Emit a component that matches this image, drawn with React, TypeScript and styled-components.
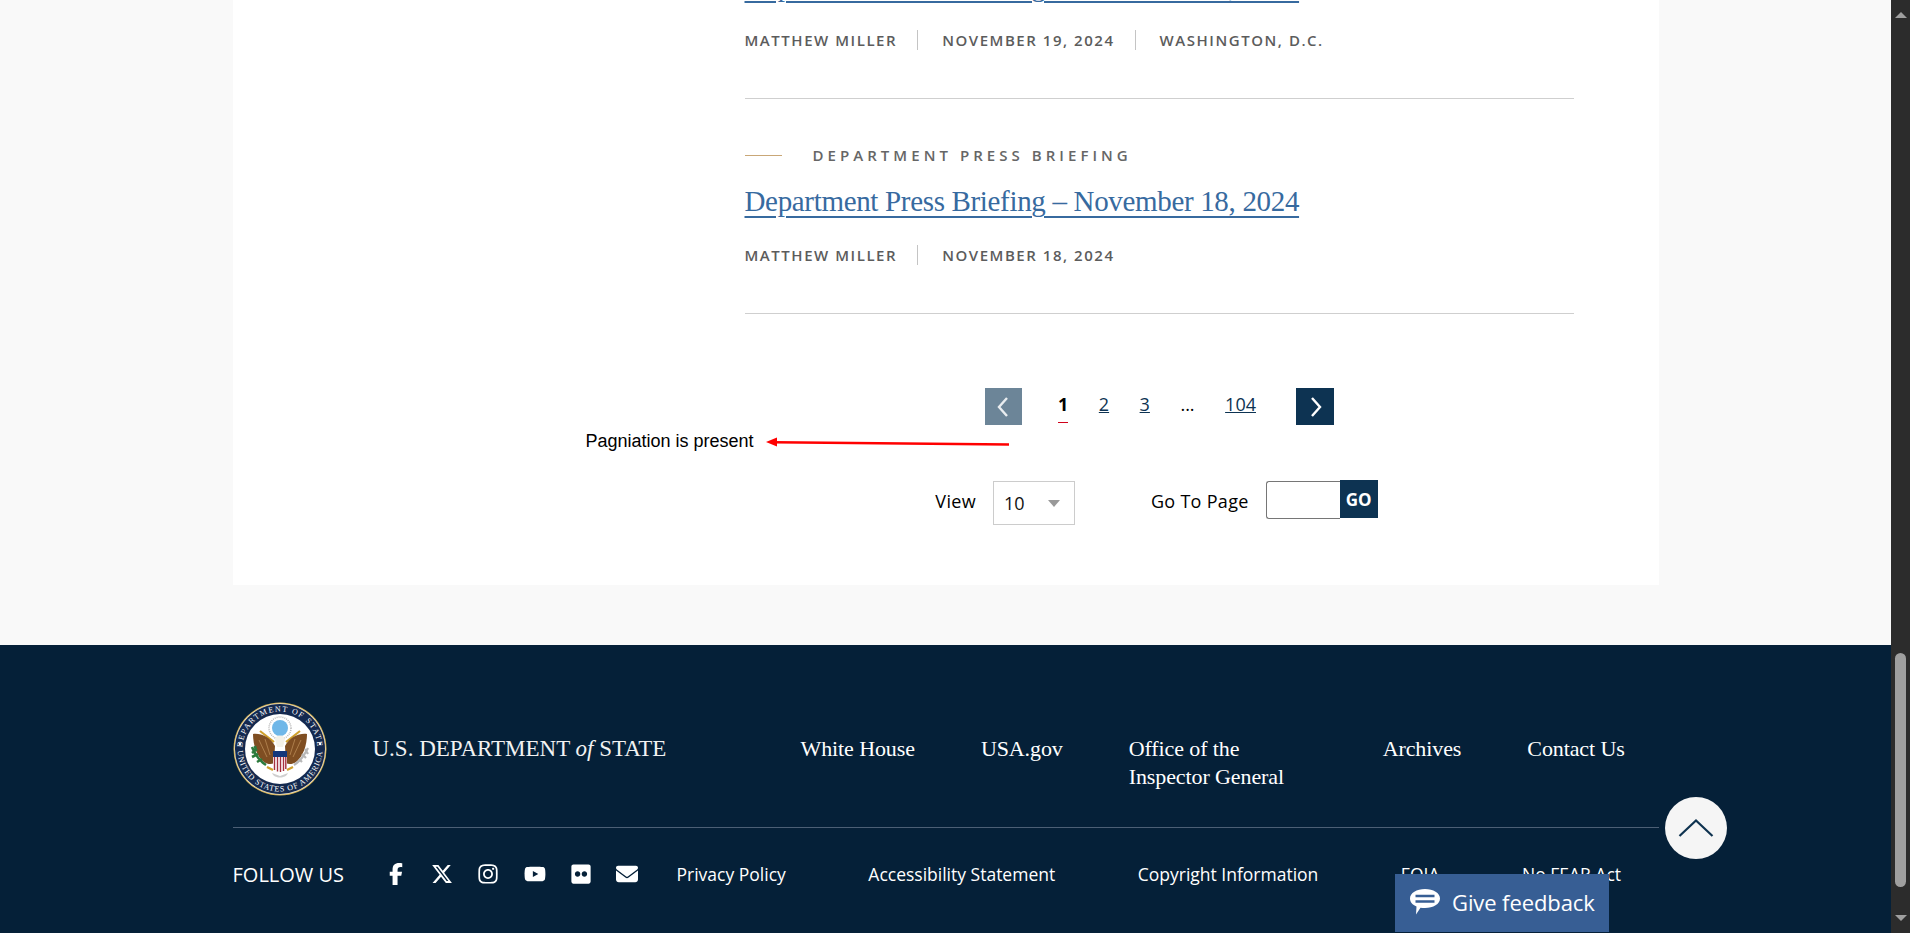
import React from 'react';
import styled, { createGlobalStyle } from 'styled-components';
import { FaFacebookF, FaXTwitter, FaInstagram, FaYoutube, FaFlickr, FaEnvelope } from 'react-icons/fa6';

const articles = [
  { title: 'Department Press Briefing – November 19, 2024', meta: ['Matthew Miller', 'November 19, 2024', 'Washington, D.C.'] },
  { title: 'Department Press Briefing – November 18, 2024', meta: ['Matthew Miller', 'November 18, 2024'] },
];

const topLinks = ['White House', 'USA.gov', 'Office of the Inspector General', 'Archives', 'Contact Us'];
const bottomLinks = ['Privacy Policy', 'Accessibility Statement', 'Copyright Information', 'FOIA', 'No FEAR Act'];
const socials = [FaFacebookF, FaXTwitter, FaInstagram, FaYoutube, FaFlickr, FaEnvelope];

const Seal = () => (
  <svg width="94" height="94" viewBox="0 0 94 94">
    <defs>
      <path id="sealTop" d="M9.500 47a37.500 37.500 0 0 1 75 0" />
      <path id="sealBottom" d="M4.500 47a42.500 42.500 0 0 0 85 0" />
    </defs>
    <circle cx="47" cy="47" r="46.500" fill="#d9b65c" />
    <circle cx="47" cy="47" r="45.500" fill="#f4efe0" />
    <circle cx="47" cy="47" r="45" fill="#14294f" />
    <circle cx="47" cy="47" r="35" fill="#fff" />
    <text fontFamily="Liberation Serif, serif" fontSize="8" fill="#fff" letterSpacing="1.300">
      <textPath href="#sealTop" startOffset="50%" textAnchor="middle">DEPARTMENT OF STATE</textPath>
    </text>
    <text fontFamily="Liberation Serif, serif" fontSize="8" fill="#fff" letterSpacing=".8">
      <textPath href="#sealBottom" startOffset="50%" textAnchor="middle">UNITED STATES OF AMERICA</textPath>
    </text>
    <circle cx="7" cy="42" r="1.300" fill="#fff" />
    <circle cx="87" cy="42" r="1.300" fill="#fff" />
    {/* glory */}
    <circle cx="47" cy="26" r="11" fill="#fff" stroke="#b9b9b9" strokeWidth="1.500" strokeDasharray="1 1" />
    <circle cx="47" cy="26" r="8" fill="#6fb7e8" />
    {/* arrows */}
    <path d="M27 29l14 11M67 29l-14 11" stroke="#d0a02c" strokeWidth="2.200" />
    {/* wings */}
    <path d="M20 32c8-1 17 3 22 12l-1 17c-3 2-7 1-10-1-7-5-11-17-11-28z" fill="#7f4e22" />
    <path d="M74 32c-8-1-17 3-22 12l1 17c3 2 7 1 10-1 7-5 11-17 11-28z" fill="#7f4e22" />
    <path d="M26 38l8 17M32 37l5 16M68 38l-8 17M62 37l-5 16" stroke="#b98a55" strokeWidth=".8" />
    {/* head */}
    <path d="M42 37c1-4 8-5 10 0l-2 8h-6z" fill="#f4f1e8" />
    {/* shield */}
    <path d="M40 49h14v6h-14z" fill="#14377a" />
    <path d="M40 55h14v10c0 3-4 4-7 5-3-1-7-2-7-5z" fill="#fff" />
    <path d="M41.500 55v13M44.500 55v14.500M47.500 55v15M50.500 55v14M52.800 55v12" stroke="#a5303f" strokeWidth="1.400" />
    {/* branches */}
    <path d="M19 45c2 5 6 13 14 18M24 47l-5 4M25 52l-6 3M29 57l-5 3M22 44l1 5" stroke="#2c7a3c" strokeWidth="2.600" fill="none" />
    <path d="M75 46c-3 6-7 13-14 17M72 47l3 5M69 52l4 4M66 57l3 3" stroke="#b7b7b7" strokeWidth="2.200" fill="none" />
    <path d="M34 65l6 3M60 65l-6 3" stroke="#d0a02c" strokeWidth="2.200" />
    {/* tail */}
    <path d="M39 71c2 6 14 6 16 0l-8 3z" fill="#cfcfcf" />
  </svg>
);

const App: React.FC = () => {
  return (
    <Viewport>
      <GlobalStyle />
      <Page>
        <Main>
          <Panel>
            {articles.map((item) => (
              <Article key={item.title}>
                <Kicker>
                  <KickerRule />
                  Department Press Briefing
                </Kicker>
                <Title href="#">{item.title}</Title>
                <Meta>
                  {item.meta.map((m) => (
                    <MetaItem key={m}>{m}</MetaItem>
                  ))}
                </Meta>
              </Article>
            ))}

            <Pagination>
              <Annotation>Pagniation is present</Annotation>
              <AnnotationArrow width="243" height="10" viewBox="0 0 243 10">
                <path d="M8 3.200 243 5.500" stroke="#f00" strokeWidth="2.500" fill="none" />
                <path d="M0 3l11-4.500v9z" fill="#f00" />
              </AnnotationArrow>
              <PageNav>
                <PageArrow $disabled aria-label="Previous">
                  <svg width="14" height="22" viewBox="0 0 14 22">
                    <path d="M11 2 3 11l8 9" fill="none" stroke="#fff" strokeWidth="2.400" opacity=".85" />
                  </svg>
                </PageArrow>
                <PageList>
                  <CurrentPage>1</CurrentPage>
                  <PageLink href="#">2</PageLink>
                  <PageLink href="#">3</PageLink>
                  <Ellipsis>...</Ellipsis>
                  <PageLink href="#">104</PageLink>
                </PageList>
                <PageArrow aria-label="Next">
                  <svg width="14" height="22" viewBox="0 0 14 22">
                    <path d="M3 2l8 9-8 9" fill="none" stroke="#fff" strokeWidth="2.400" />
                  </svg>
                </PageArrow>
              </PageNav>
              <Controls>
                <ControlGroup>
                  <ControlLabel>View</ControlLabel>
                  <SelectBox>
                    10
                    <SelectCaret />
                  </SelectBox>
                </ControlGroup>
                <ControlGroup>
                  <ControlLabel>Go To Page</ControlLabel>
                  <GoForm>
                    <GoInput />
                    <GoButton>GO</GoButton>
                  </GoForm>
                </ControlGroup>
              </Controls>
            </Pagination>
          </Panel>
        </Main>

        <Footer>
          <FooterInner>
            <FooterTop>
              <SealWrap>
                <Seal />
              </SealWrap>
              <Wordmark>
                U.S. DEPARTMENT <em>of</em> STATE
              </Wordmark>
              <TopLinks>
                {topLinks.map((l) => (
                  <TopLink key={l} href="#" $wide={l.length > 20}>
                    {l}
                  </TopLink>
                ))}
              </TopLinks>
            </FooterTop>
            <FooterBottom>
              <FollowUs>FOLLOW US</FollowUs>
              <Socials>
                {socials.map((Icon, i) => (
                  <SocialLink key={i} href="#">
                    <Icon />
                  </SocialLink>
                ))}
              </Socials>
              <BottomLinks>
                {bottomLinks.map((l) => (
                  <BottomLink key={l} href="#">
                    {l}
                  </BottomLink>
                ))}
              </BottomLinks>
            </FooterBottom>
          </FooterInner>
        </Footer>

        <ScrollTop aria-label="Back to top">
          <svg width="36" height="20" viewBox="0 0 36 20">
            <path d="M1.500 18 18 2.500 34.500 18" fill="none" stroke="#0f3350" strokeWidth="2.200" />
          </svg>
        </ScrollTop>
        <Feedback>
          <svg width="30" height="26" viewBox="0 0 30 26">
            <path d="M15 0c8.300 0 15 3.900 15 9.500S23.300 19 15 19c-1.600 0-3 0-4.500-.3L6 25.500l.5-8C2.500 16 0 13 0 9.500 0 3.900 6.700 0 15 0z" fill="#fff" />
            <path d="M5.500 7h19M5.500 12.500h19" stroke="#375e94" strokeWidth="2.400" />
          </svg>
          Give feedback
        </Feedback>
      </Page>
      <Scrollbar>
        <ScrollCaret />
        <ScrollTrack>
          <ScrollThumb />
        </ScrollTrack>
        <ScrollCaret $down />
      </Scrollbar>
    </Viewport>
  );
};

const GlobalStyle = createGlobalStyle`
  html, body {
    margin: 0;
    height: 100%;
    overflow: hidden;
    font-family: "Open Sans", "Liberation Sans", sans-serif;
  }
  * { box-sizing: border-box; }
`;

const Viewport = styled.div`
  display: flex;
  height: 933px;
  overflow: hidden;
`;

const Page = styled.div`
  position: relative;
  flex: 1;
  min-width: 0;
  overflow: hidden;
  background: #f9f9f9;
`;

const Main = styled.main`
  margin-top: -116px;
  padding-bottom: 60px;
`;

const Panel = styled.div`
  width: 1426px;
  margin: 0 auto;
  padding: 0 85px 60px 512px;
  background: #fff;
`;

const Article = styled.article`
  height: 215px;
  padding-top: 48px;
  border-bottom: 1px solid #cfcfcf;
`;

const Kicker = styled.div`
  display: flex;
  align-items: center;
  height: 16px;
  font-size: 15px;
  font-weight: 600;
  letter-spacing: 4.05px;
  text-transform: uppercase;
  color: #666;
`;

const KickerRule = styled.span`
  width: 37px;
  height: 1px;
  margin-right: 31px;
  background: #c9a777;
`;

const Title = styled.a`
  display: inline-block;
  margin-top: 19px;
  font-family: "Liberation Serif", serif;
  font-size: 29px;
  line-height: 38px;
  letter-spacing: -0.33px;
  color: #376a9f;
  text-decoration: underline;
  text-decoration-thickness: 2px;
  text-underline-offset: 5px;
`;

const Meta = styled.div`
  display: flex;
  margin-top: 25px;
`;

const MetaItem = styled.span`
  height: 20px;
  padding-right: 20px;
  margin-right: 24px;
  border-right: 1px solid #c4c4c4;
  font-size: 15px;
  font-weight: 600;
  line-height: 20px;
  letter-spacing: 1.54px;
  text-transform: uppercase;
  color: #5c5c5c;

  &:last-child {
    border-right: 0;
  }
`;

const Pagination = styled.section`
  position: relative;
  padding-top: 74px;
`;

const Annotation = styled.span`
  position: absolute;
  left: -159px;
  top: 115px;
  font-family: "Liberation Sans", Arial, sans-serif;
  font-size: 18px;
  line-height: 24px;
  color: #000;
`;

const AnnotationArrow = styled.svg`
  position: absolute;
  left: 21px;
  top: 125px;
  overflow: visible;
`;

const PageNav = styled.nav`
  display: flex;
  justify-content: center;
  align-items: flex-start;
  height: 37px;
  padding-left: 1px;
`;

const PageArrow = styled.button<{ $disabled?: boolean }>`
  display: flex;
  align-items: center;
  justify-content: center;
  width: ${(p) => (p.$disabled ? '37px' : '38px')};
  height: 37px;
  padding: ${(p) => (p.$disabled ? '0 2px 0 0' : '0 0 0 3px')};
  border: 0;
  background: ${(p) => (p.$disabled ? '#6c8598' : '#0d3352')};
`;

const PageList = styled.div`
  display: flex;
  align-items: flex-start;
  gap: 30.500px;
  margin: 0 40px 0 36px;
  font-size: 18px;
  line-height: 33px;
`;

const CurrentPage = styled.span`
  position: relative;
  font-weight: 700;
  color: #000;

  &::after {
    content: '';
    position: absolute;
    left: 0;
    right: 0;
    bottom: -2px;
    height: 1px;
    background: #d0021b;
  }
`;

const PageLink = styled.a`
  color: #0d3352;
  text-decoration: underline;
`;

const Ellipsis = styled.span`
  color: #000;
`;

const Controls = styled.div`
  display: flex;
  justify-content: center;
  gap: 76px;
  height: 44px;
  margin: 56px 5px 0 0;
`;

const ControlGroup = styled.div`
  display: flex;
  align-items: flex-start;
  gap: 17px;
`;

const ControlLabel = styled.label`
  font-size: 18px;
  letter-spacing: 0.3px;
  line-height: 40px;
  color: #000;
`;

const SelectBox = styled.div`
  display: flex;
  align-items: center;
  justify-content: space-between;
  width: 82px;
  height: 44px;
  padding: 0 14px 0 10px;
  border: 1px solid #ccc;
  font-size: 18px;
  color: #111;
`;

const SelectCaret = styled.span`
  width: 0;
  height: 0;
  border-left: 6px solid transparent;
  border-right: 6px solid transparent;
  border-top: 7px solid #999;
`;

const GoForm = styled.div`
  display: flex;
`;

const GoInput = styled.input`
  width: 74px;
  height: 38px;
  padding: 0;
  border: 1px solid #767676;
  border-right: 0;
  border-radius: 3px 0 0 3px;
  background: #fff;
`;

const GoButton = styled.button`
  width: 38px;
  height: 38px;
  margin-top: -1px;
  padding: 0;
  border: 0;
  background: #0d3352;
  font-family: inherit;
  font-size: 17px;
  font-weight: 700;
  color: #fff;
`;

const Footer = styled.footer`
  height: 400px;
  padding-top: 57px;
  background: #052038;
`;

const FooterInner = styled.div`
  width: 1426px;
  margin: 0 auto;
`;

const FooterTop = styled.div`
  display: flex;
  align-items: flex-start;
  height: 126px;
  border-bottom: 1px solid #4c5f75;
`;

const SealWrap = styled.div`
  flex: 0 0 94px;
  height: 94px;
  margin-right: 46px;
`;

const Wordmark = styled.div`
  flex: 0 0 428px;
  padding-top: 33px;
  font-family: "Liberation Serif", serif;
  font-size: 23px;
  line-height: 28px;
  color: #f2f2f2;

  em {
    font-style: italic;
  }
`;

const TopLinks = styled.div`
  display: flex;
  gap: 66px;
  padding-top: 33px;
`;

const TopLink = styled.a<{ $wide?: boolean }>`
  ${(p) => p.$wide && 'width: 188px;'}
  font-family: "Liberation Serif", serif;
  font-size: 22px;
  line-height: 28px;
  letter-spacing: -0.1px;
  color: #fff;
  text-decoration: none;
`;

const FooterBottom = styled.div`
  display: flex;
  align-items: center;
  height: 92px;
`;

const FollowUs = styled.span`
  width: 140px;
  font-size: 20px;
  color: #fff;
`;

const Socials = styled.div`
  display: flex;
  align-items: center;
  width: 304px;
`;

const SocialLink = styled.a`
  display: flex;
  justify-content: center;
  width: 46.300px;
  font-size: 22px;
  color: #fff;
`;

const BottomLinks = styled.div`
  display: flex;
  gap: 82.500px;
`;

const BottomLink = styled.a`
  font-size: 17.500px;
  color: #fff;
  text-decoration: none;
`;

const ScrollTop = styled.button`
  position: absolute;
  left: 1665px;
  top: 797px;
  display: flex;
  align-items: center;
  justify-content: center;
  width: 62px;
  height: 62px;
  padding: 0;
  border: 0;
  border-radius: 50%;
  background: #f5f5f5;
`;

const Feedback = styled.button`
  position: absolute;
  left: 1395px;
  top: 874px;
  display: flex;
  align-items: center;
  gap: 12px;
  width: 214px;
  height: 58px;
  padding: 0 0 2px 15px;
  border: 0;
  background: #375e94;
  font-family: inherit;
  font-size: 22px;
  letter-spacing: -0.1px;
  color: #fff;
`;

const Scrollbar = styled.div`
  display: flex;
  flex-direction: column;
  flex: 0 0 19px;
  background: #2c2c2c;
`;

const ScrollCaret = styled.span<{ $down?: boolean }>`
  flex: 0 0 6px;
  align-self: center;
  width: 0;
  height: 0;
  margin: ${(p) => (p.$down ? '0 0 12px' : '12px 0 0')};
  border-left: 6px solid transparent;
  border-right: 6px solid transparent;
  ${(p) => (p.$down ? 'border-top: 6px solid #9f9f9f;' : 'border-bottom: 6px solid #9f9f9f;')}
`;

const ScrollTrack = styled.div`
  flex: 1;
  display: flex;
  flex-direction: column;
  justify-content: flex-end;
  padding: 0 4px 28px;
`;

const ScrollThumb = styled.div`
  height: 234px;
  border-radius: 6px;
  background: #9f9f9f;
`;

export default App;
